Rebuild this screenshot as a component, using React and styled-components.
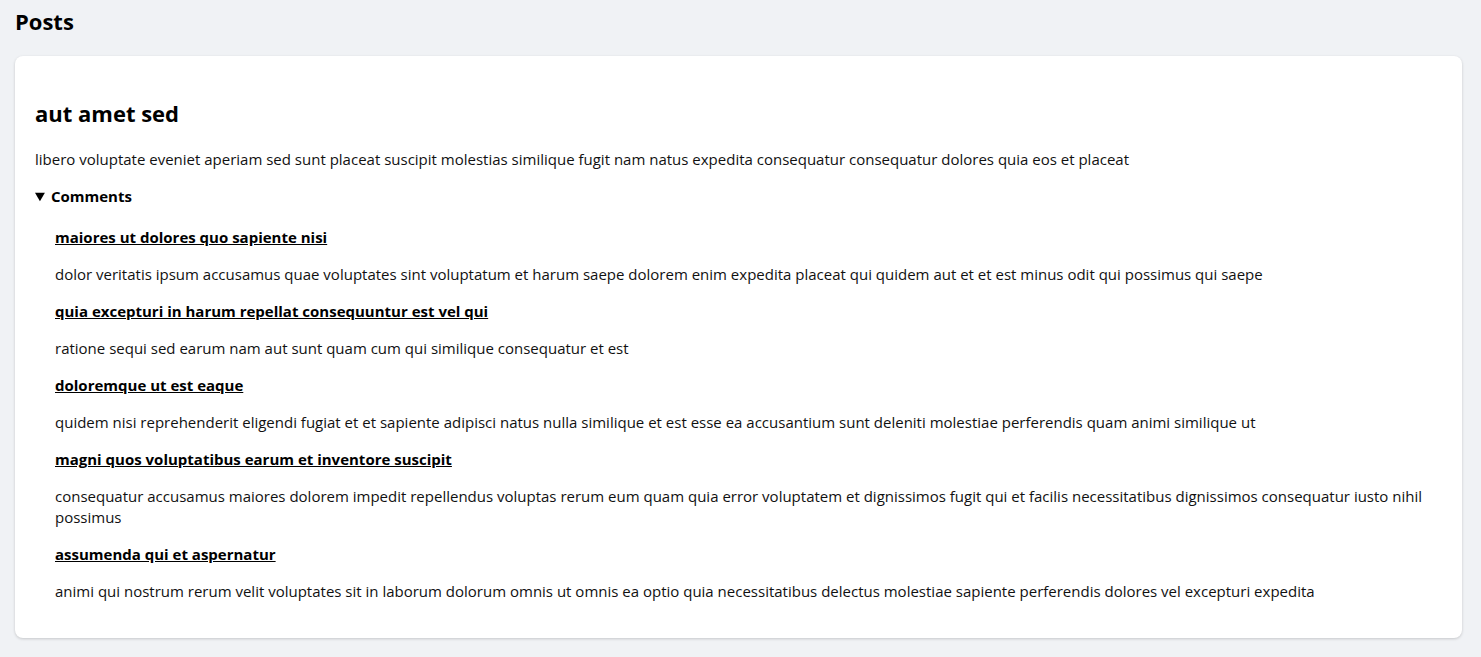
import React from 'react';
import styled, { createGlobalStyle } from 'styled-components';

const GlobalStyle = createGlobalStyle`
  html, body {
    margin: 0;
    padding: 0;
    background: #f0f2f5;
  }
  body {
    font-family: "Open Sans", "Noto Sans", "Liberation Sans", sans-serif;
    font-size: 15px;
    line-height: 21px;
    color: #111;
  }
`;

const Page = styled.div`
  padding: 0 19px 20px 15px;
`;

const PageTitle = styled.h1`
  margin: 0;
  padding: 5px 0 19px;
  font-size: 22px;
  line-height: 32px;
  font-weight: 700;
  color: #000;
`;

const Card = styled.article`
  background: #fff;
  border-radius: 8px;
  box-shadow: 0 1px 3px rgba(0, 0, 0, 0.18);
  padding: 20px;
`;

const PostTitle = styled.h2`
  margin: 21px 0 20px;
  font-size: 22px;
  line-height: 32px;
  font-weight: 700;
  color: #000;
`;

const Text = styled.p`
  margin: 16px 0;
`;

const Comments = styled.details`
  margin: 16px 0;
`;

const Summary = styled.summary`
  font-weight: 700;
  font-size: 15px;
  color: #000;
  cursor: pointer;
`;

const CommentList = styled.div`
  padding: 4px 0 0 20px;
`;

const CommentTitle = styled.a`
  display: block;
  margin: 16px 0;
  font-weight: 700;
  font-size: 15px;
  color: #000;
  text-decoration: underline;
`;

const comments = [
  {
    title: 'maiores ut dolores quo sapiente nisi',
    body: 'dolor veritatis ipsum accusamus quae voluptates sint voluptatum et harum saepe dolorem enim expedita placeat qui quidem aut et et est minus odit qui possimus qui saepe',
  },
  {
    title: 'quia excepturi in harum repellat consequuntur est vel qui',
    body: 'ratione sequi sed earum nam aut sunt quam cum qui similique consequatur et est',
  },
  {
    title: 'doloremque ut est eaque',
    body: 'quidem nisi reprehenderit eligendi fugiat et et sapiente adipisci natus nulla similique et est esse ea accusantium sunt deleniti molestiae perferendis quam animi similique ut',
  },
  {
    title: 'magni quos voluptatibus earum et inventore suscipit',
    body: 'consequatur accusamus maiores dolorem impedit repellendus voluptas rerum eum quam quia error voluptatem et dignissimos fugit qui et facilis necessitatibus dignissimos consequatur iusto nihil possimus',
  },
  {
    title: 'assumenda qui et aspernatur',
    body: 'animi qui nostrum rerum velit voluptates sit in laborum dolorum omnis ut omnis ea optio quia necessitatibus delectus molestiae sapiente perferendis dolores vel excepturi expedita',
  },
];

export default function App() {
  return (
    <>
      <GlobalStyle />
      <Page>
        <PageTitle>Posts</PageTitle>
        <Card>
          <PostTitle>aut amet sed</PostTitle>
          <Text>
            libero voluptate eveniet aperiam sed sunt placeat suscipit molestias similique fugit nam natus expedita consequatur consequatur dolores quia eos et placeat
          </Text>
          <Comments open>
            <Summary>Comments</Summary>
            <CommentList>
              {comments.map((c) => (
                <div key={c.title}>
                  <CommentTitle href="#">{c.title}</CommentTitle>
                  <Text>{c.body}</Text>
                </div>
              ))}
            </CommentList>
          </Comments>
        </Card>
      </Page>
    </>
  );
}
